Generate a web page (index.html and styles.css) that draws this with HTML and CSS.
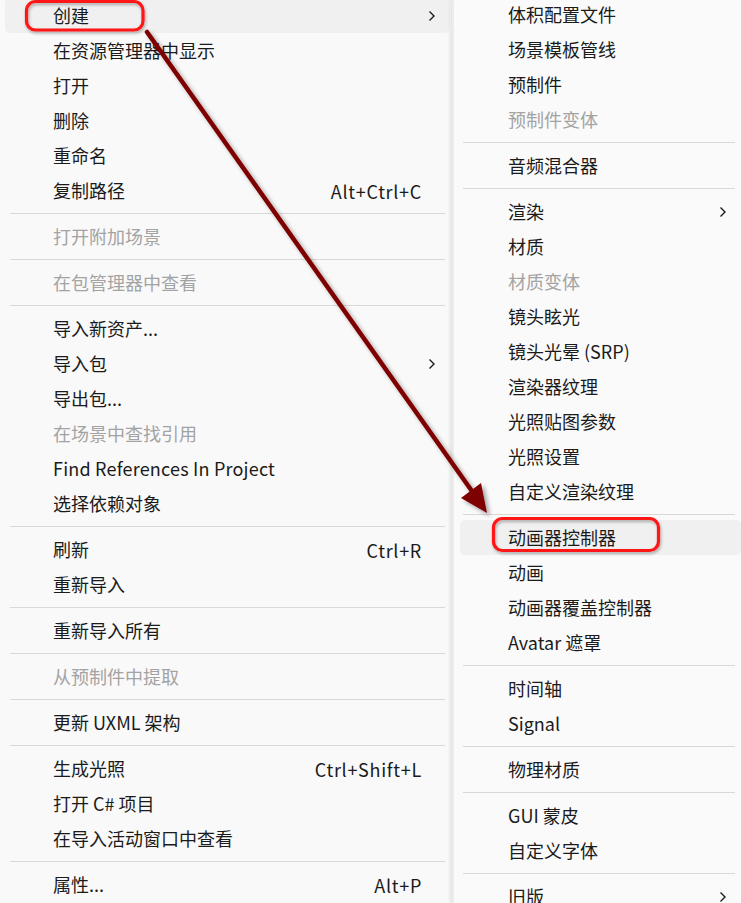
FILE: index.html
```html
<!DOCTYPE html>
<html lang="zh-CN">
<head>
<meta charset="utf-8">
<title>Context menu</title>
<link rel="stylesheet" href="styles.css">
</head>
<body>
<div class="screen">
  <div class="menu menu-main">
    <div class="item active"><span class="label">创建</span><span class="sub"><svg viewBox="0 0 8 12" class="chev"><path d="M1.5 1.5 L6 6 L1.5 10.5" /></svg></span></div>
    <div class="item"><span class="label">在资源管理器中显示</span><span class="sub"></span></div>
    <div class="item"><span class="label">打开</span><span class="sub"></span></div>
    <div class="item"><span class="label">删除</span><span class="sub"></span></div>
    <div class="item"><span class="label">重命名</span><span class="sub"></span></div>
    <div class="item"><span class="label">复制路径</span><span class="key">Alt+Ctrl+C</span><span class="sub"></span></div>
    <div class="sep"></div>
    <div class="item disabled"><span class="label">打开附加场景</span><span class="sub"></span></div>
    <div class="sep"></div>
    <div class="item disabled"><span class="label">在包管理器中查看</span><span class="sub"></span></div>
    <div class="sep"></div>
    <div class="item"><span class="label">导入新资产...</span><span class="sub"></span></div>
    <div class="item"><span class="label">导入包</span><span class="sub"><svg viewBox="0 0 8 12" class="chev"><path d="M1.5 1.5 L6 6 L1.5 10.5" /></svg></span></div>
    <div class="item"><span class="label">导出包...</span><span class="sub"></span></div>
    <div class="item disabled"><span class="label">在场景中查找引用</span><span class="sub"></span></div>
    <div class="item"><span class="label latin">Find References In Project</span><span class="sub"></span></div>
    <div class="item"><span class="label">选择依赖对象</span><span class="sub"></span></div>
    <div class="sep"></div>
    <div class="item"><span class="label">刷新</span><span class="key">Ctrl+R</span><span class="sub"></span></div>
    <div class="item"><span class="label">重新导入</span><span class="sub"></span></div>
    <div class="sep"></div>
    <div class="item"><span class="label">重新导入所有</span><span class="sub"></span></div>
    <div class="sep"></div>
    <div class="item disabled"><span class="label">从预制件中提取</span><span class="sub"></span></div>
    <div class="sep"></div>
    <div class="item"><span class="label">更新 UXML 架构</span><span class="sub"></span></div>
    <div class="sep"></div>
    <div class="item"><span class="label">生成光照</span><span class="key">Ctrl+Shift+L</span><span class="sub"></span></div>
    <div class="item"><span class="label">打开 C# 项目</span><span class="sub"></span></div>
    <div class="item"><span class="label">在导入活动窗口中查看</span><span class="sub"></span></div>
    <div class="sep"></div>
    <div class="item"><span class="label">属性...</span><span class="key">Alt+P</span><span class="sub"></span></div>
  </div>
  <div class="menu menu-sub">
    <div class="item"><span class="label">体积配置文件</span><span class="sub"></span></div>
    <div class="item"><span class="label">场景模板管线</span><span class="sub"></span></div>
    <div class="item"><span class="label">预制件</span><span class="sub"></span></div>
    <div class="item disabled"><span class="label">预制件变体</span><span class="sub"></span></div>
    <div class="sep"></div>
    <div class="item"><span class="label">音频混合器</span><span class="sub"></span></div>
    <div class="sep"></div>
    <div class="item"><span class="label">渲染</span><span class="sub"><svg viewBox="0 0 8 12" class="chev"><path d="M1.5 1.5 L6 6 L1.5 10.5" /></svg></span></div>
    <div class="item"><span class="label">材质</span><span class="sub"></span></div>
    <div class="item disabled"><span class="label">材质变体</span><span class="sub"></span></div>
    <div class="item"><span class="label">镜头眩光</span><span class="sub"></span></div>
    <div class="item"><span class="label">镜头光晕 (SRP)</span><span class="sub"></span></div>
    <div class="item"><span class="label">渲染器纹理</span><span class="sub"></span></div>
    <div class="item"><span class="label">光照贴图参数</span><span class="sub"></span></div>
    <div class="item"><span class="label">光照设置</span><span class="sub"></span></div>
    <div class="item"><span class="label">自定义渲染纹理</span><span class="sub"></span></div>
    <div class="sep"></div>
    <div class="item active"><span class="label">动画器控制器</span><span class="sub"></span></div>
    <div class="item"><span class="label">动画</span><span class="sub"></span></div>
    <div class="item"><span class="label">动画器覆盖控制器</span><span class="sub"></span></div>
    <div class="item"><span class="label">Avatar 遮罩</span><span class="sub"></span></div>
    <div class="sep"></div>
    <div class="item"><span class="label">时间轴</span><span class="sub"></span></div>
    <div class="item"><span class="label">Signal</span><span class="sub"></span></div>
    <div class="sep"></div>
    <div class="item"><span class="label">物理材质</span><span class="sub"></span></div>
    <div class="sep"></div>
    <div class="item"><span class="label">GUI 蒙皮</span><span class="sub"></span></div>
    <div class="item"><span class="label">自定义字体</span><span class="sub"></span></div>
    <div class="sep"></div>
    <div class="item"><span class="label">旧版</span><span class="sub"><svg viewBox="0 0 8 12" class="chev"><path d="M1.5 1.5 L6 6 L1.5 10.5" /></svg></span></div>
  </div>
  <svg class="annot" viewBox="0 0 741 903" width="741" height="903">
    <defs>
      <filter id="shadow" x="-20%" y="-20%" width="140%" height="140%">
        <feDropShadow dx="3" dy="3" stdDeviation="2.2" flood-color="#000" flood-opacity="0.35"/>
      </filter>
      <filter id="glow" x="-20%" y="-40%" width="140%" height="180%">
        <feDropShadow dx="1" dy="2" stdDeviation="1.5" flood-color="#000" flood-opacity="0.3"/>
      </filter>
    </defs>
    <g filter="url(#shadow)">
      <line x1="147" y1="32" x2="474" y2="494" stroke="#7f0000" stroke-width="4.5" stroke-linecap="round"/>
      <polygon points="487,513 461,498 481,483" fill="#7f0000"/>
    </g>
    <rect x="26.5" y="1.5" width="116.5" height="28.5" rx="9" fill="none" stroke="#ff1414" stroke-width="3.2" filter="url(#glow)"/>
    <rect x="493.5" y="518.5" width="165" height="32" rx="9" fill="none" stroke="#ff1414" stroke-width="3.2" filter="url(#glow)"/>
  </svg>
</div>
</body>
</html>
```
FILE: styles.css
```css
html, body {
  margin: 0;
  padding: 0;
  background: #f9f9f9;
}
.screen {
  position: relative;
  width: 741px;
  height: 903px;
  overflow: hidden;
  display: flex;
  font-family: "Noto Sans CJK SC", "Noto Sans", sans-serif;
  font-size: 18px;
  color: #1b1b1b;
}
.menu {
  display: flex;
  flex-direction: column;
  flex: none;
}
.menu-main {
  width: 452px;
  margin-top: -2px;
  background: #f9f9f9;
  box-shadow: inset -3px 0 4px -2px rgba(0, 0, 0, 0.06);
}
.menu-sub {
  flex: 1;
  margin-top: -3px;
  background: #fafafa;
  border-left: 2px solid #ececec;
  box-shadow: -2px 0 4px rgba(0, 0, 0, 0.06);
}
.item {
  height: 35px;
  flex: none;
  display: flex;
  align-items: center;
  border-radius: 5px;
  padding-left: 48px;
}
.menu-main .item {
  margin: 0 2px 0 5px;
}
.menu-sub .item {
  margin: 0 0 0 6px;
  padding-left: 48px;
}
.item.active {
  background: #f0f0f0;
}
.item.disabled {
  color: #a3a3a3;
}
.label {
  flex: 1;
  white-space: nowrap;
  line-height: 35px;
}
.latin {
  letter-spacing: 0.2px;
}
.key {
  white-space: nowrap;
  letter-spacing: 0.7px;
}
.sub {
  width: 28px;
  flex: none;
  display: flex;
  align-items: center;
}
.menu-sub .sub {
  width: 28px;
}
.chev {
  width: 8px;
  height: 12px;
  margin-left: 6px;
}
.chev path {
  fill: none;
  stroke: #1b1b1b;
  stroke-width: 1.4;
}
.sep {
  height: 11px;
  flex: none;
  display: flex;
  align-items: center;
}
.sep::before {
  content: "";
  display: block;
  height: 1px;
  width: 100%;
  background: #d9d9d9;
}
.menu-main .sep {
  margin: 0 7px 0 10px;
}
.menu-sub .sep {
  margin: 0 6px 0 9px;
}
.annot {
  position: absolute;
  left: 0;
  top: 0;
  pointer-events: none;
}
```
